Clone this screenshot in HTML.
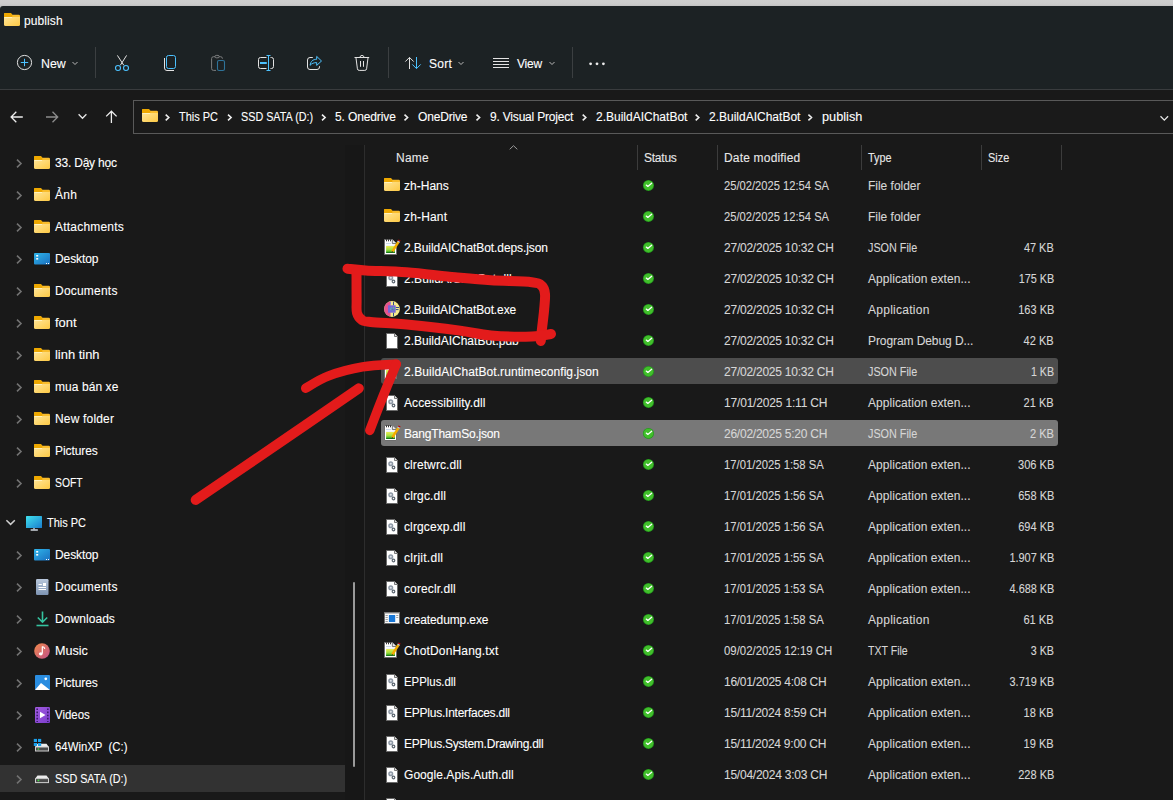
<!DOCTYPE html>
<html><head><meta charset="utf-8">
<style>
*{box-sizing:border-box}
html,body{margin:0;padding:0}
body{width:1173px;height:800px;overflow:hidden;position:relative;background:#191919;font-family:"Liberation Sans", sans-serif;font-size:12px;color:#fff}
.a{position:absolute}
.t{position:absolute;white-space:pre;-webkit-text-stroke:0.1px currentColor;line-height:14px;height:14px}
svg{position:absolute;overflow:visible}
</style></head><body>
<svg width="0" height="0" style="left:0;top:0"><defs>
<linearGradient id="fg" x1="0" y1="0" x2="1" y2="1"><stop offset="0" stop-color="#ffe597"/><stop offset="1" stop-color="#fdc944"/></linearGradient>
<linearGradient id="ng" x1="0" y1="0" x2="0" y2="1"><stop offset="0" stop-color="#dce8f0"/><stop offset="0.12" stop-color="#e6ea50"/><stop offset="0.55" stop-color="#a6e040"/><stop offset="1" stop-color="#2aa81e"/></linearGradient>
<linearGradient id="mon" x1="0" y1="0" x2="1" y2="1"><stop offset="0" stop-color="#40e2ee"/><stop offset="1" stop-color="#1a7ccc"/></linearGradient>
<linearGradient id="desk" x1="0" y1="0" x2="1" y2="1"><stop offset="0" stop-color="#2fb5ea"/><stop offset="1" stop-color="#1a6fc0"/></linearGradient>
<linearGradient id="doc" x1="0" y1="0" x2="0" y2="1"><stop offset="0" stop-color="#b9c8dc"/><stop offset="1" stop-color="#7d93b2"/></linearGradient>
<linearGradient id="mus" x1="0" y1="0" x2="1" y2="1"><stop offset="0" stop-color="#f08a4a"/><stop offset="1" stop-color="#c2508a"/></linearGradient>
<linearGradient id="vid" x1="0" y1="0" x2="1" y2="1"><stop offset="0" stop-color="#a35ce0"/><stop offset="1" stop-color="#7a3ccc"/></linearGradient>
</defs></svg>

<div class="a" style="left:0;top:0;width:1173px;height:12px;background:linear-gradient(#cecece 0,#cbcbcb 4px,#c2c2c2 6px)"></div>
<div class="a" style="left:0;top:6px;width:1173px;height:83px;background:#1c2224;border-top-left-radius:3px"></div>
<div class="a" style="left:0;top:89px;width:1173px;height:1px;background:#393c3e"></div>
<svg style="left:4px;top:13px" width="16" height="13" viewBox="0 0 16 13"><path d="M1.3 0 H6.8 L8.3 1.7 H14.7 Q16 1.7 16 3 V5 H0 V1.3 Q0 0 1.3 0Z" fill="#f9bd2c"/><path d="M1.3 0 H6.8 L8.3 1.7 V4.2 H0 V1.3 Q0 0 1.3 0Z" fill="#eea800"/><path d="M0 4 H16 V11.5 Q16 13 14.5 13 H1.5 Q0 13 0 11.5Z" fill="url(#fg)"/><path d="M0.5 4.5 H8" stroke="#fff2bd" stroke-width="1"/></svg>
<div class="t" style="left:24px;top:14px;color:#fff;letter-spacing:0.1px">publish</div>
<svg style="left:0;top:0" width="1173" height="140" viewBox="0 0 1173 140"><g fill="none" stroke-width="1">
<circle cx="24.5" cy="62.5" r="7.1" stroke="#e3e3e3"/>
<path d="M24.5 58.8 V66.2 M20.8 62.5 H28.2" stroke="#4cc2ff"/>
<path d="M72.5 62 L75 64.5 L77.5 62" stroke="#b8b8b8"/>
<path d="M117.4 55.4 L123.8 65.3 M126.6 55.4 L120.3 65.3" stroke="#e3e3e3"/>
<circle cx="118" cy="68" r="2.5" stroke="#4cc2ff" stroke-width="1.1"/>
<circle cx="126" cy="68" r="2.5" stroke="#4cc2ff" stroke-width="1.1"/>
<rect x="166.5" y="55.5" width="9" height="13" rx="2" stroke="#4cc2ff"/>
<path d="M164.5 58 V68 Q164.5 70.5 167 70.5 H174" stroke="#e3e3e3"/>
<path d="M215 56.7 H213.5 Q211.6 56.7 211.6 58.6 V68.5 Q211.6 70.4 213.5 70.4 H216 M219.2 56.7 H220.6 Q222.4 56.7 222.4 58.5 V58.8" stroke="#7c7e7f"/>
<rect x="215" y="55.4" width="4.2" height="2.4" rx="1.2" stroke="#7c7e7f"/>
<rect x="217.5" y="60.5" width="7" height="10" rx="1.6" stroke="#2f7399" stroke-width="1.1"/>
<path d="M266.5 57.5 H260.5 Q258.5 57.5 258.5 59.5 V66.5 Q258.5 68.5 260.5 68.5 H266.5 M270.5 57.5 H271.5 Q273.5 57.5 273.5 59.5 V66.5 Q273.5 68.5 271.5 68.5 H270.5" stroke="#e3e3e3"/>
<path d="M268.5 55.5 V70.5 M266.5 55.5 H270.5 M266.5 70.5 H270.5" stroke="#4cc2ff"/>
<path d="M260 63 H266.8" stroke="#4cc2ff" stroke-width="2"/>
<path d="M312.8 57.5 H310 Q307.5 57.5 307.5 60 V67 Q307.5 69.5 310 69.5 H317 Q319.5 69.5 319.5 67 V66.2" stroke="#e3e3e3"/>
<path d="M310.1 65.3 C310.5 61.3 313 59.3 316.7 59.3 V56.4 L321.5 61 L316.7 65.4 V62.6 C313.8 62.6 311.8 63.4 310.1 65.3 Z" stroke="#4cc2ff" stroke-linejoin="round"/>
<path d="M354.5 57.5 H369.2" stroke="#e3e3e3"/>
<path d="M359.9 57.3 Q360.2 55.4 362 55.4 Q363.8 55.4 364.1 57.3" stroke="#e3e3e3"/>
<path d="M356 58 L357.4 68.8 Q357.6 70.4 359.2 70.4 H364.8 Q366.4 70.4 366.6 68.8 L368 58" stroke="#e3e3e3"/>
<path d="M360.5 61 V66.8 M363.5 61 V66.8" stroke="#e3e3e3"/>
<path d="M409.5 69 V57.5 M405.3 61.6 L409.5 57.4 L413.7 61.6" stroke="#e3e3e3"/>
<path d="M416.5 57 V68.5 M412.3 64.4 L416.5 68.6 L420.7 64.4" stroke="#4cc2ff"/>
<path d="M458.5 62 L461 64.5 L463.5 62" stroke="#b8b8b8"/>
<path d="M493 58.5 H509 M493 61.5 H509 M493 64.5 H509 M493 67.5 H509" stroke="#e3e3e3"/>
<path d="M549.5 62 L552 64.5 L554.5 62" stroke="#b8b8b8"/>
</g>
<circle cx="590.6" cy="63.8" r="1.4" fill="#ececec"/><circle cx="597" cy="63.8" r="1.4" fill="#ececec"/><circle cx="603.4" cy="63.8" r="1.4" fill="#ececec"/>
<g fill="none" stroke-width="1.3">
<path d="M22.8 117 H11.2 M16.3 111.8 L11.1 117 L16.3 122.2" stroke="#ececec"/>
<path d="M46 117 H57.6 M52.5 111.8 L57.7 117 L52.5 122.2" stroke="#8c8c8c"/>
<path d="M78.6 114.3 L82.5 118.3 L86.4 114.3" stroke="#e6e6e6"/>
<path d="M111.4 123 V111.4 M106.2 116.4 L111.4 111.2 L116.6 116.4" stroke="#ececec"/>
</g></svg>
<div class="t" style="left:41px;top:57px;color:#fff;transform:scaleX(1.0333);transform-origin:0 0">New</div>
<div class="a" style="left:95px;top:47px;width:1px;height:31px;background:#3b3f41"></div>
<div class="a" style="left:388px;top:47px;width:1px;height:31px;background:#3b3f41"></div>
<div class="t" style="left:429px;top:57px;color:#fff;letter-spacing:0.3px">Sort</div>
<div class="t" style="left:517px;top:57px;color:#fff;letter-spacing:-0.2px">View</div>
<div class="a" style="left:572px;top:47px;width:1px;height:31px;background:#3b3f41"></div>
<div class="a" style="left:133px;top:100px;width:1100px;height:34px;border:1px solid #595959;background:#1a1a1a"></div>
<svg style="left:142px;top:109px" width="16" height="13" viewBox="0 0 16 13"><path d="M1.3 0 H6.8 L8.3 1.7 H14.7 Q16 1.7 16 3 V5 H0 V1.3 Q0 0 1.3 0Z" fill="#f9bd2c"/><path d="M1.3 0 H6.8 L8.3 1.7 V4.2 H0 V1.3 Q0 0 1.3 0Z" fill="#eea800"/><path d="M0 4 H16 V11.5 Q16 13 14.5 13 H1.5 Q0 13 0 11.5Z" fill="url(#fg)"/><path d="M0.5 4.5 H8" stroke="#fff2bd" stroke-width="1"/></svg>
<div class="t" style="left:179px;top:110px;color:#fff;transform:scaleX(0.9133);transform-origin:0 0">This PC</div>
<div class="t" style="left:241px;top:110px;color:#fff;transform:scaleX(0.8990);transform-origin:0 0">SSD SATA (D:)</div>
<div class="t" style="left:335px;top:110px;color:#fff;letter-spacing:-0.12px">5. Onedrive</div>
<div class="t" style="left:418px;top:110px;color:#fff;letter-spacing:-0.171px">OneDrive</div>
<div class="t" style="left:490px;top:110px;color:#fff;letter-spacing:-0.194px">9. Visual Project</div>
<div class="t" style="left:596px;top:110px;color:#fff">2.BuildAIChatBot</div>
<div class="t" style="left:709px;top:110px;color:#fff">2.BuildAIChatBot</div>
<div class="t" style="left:822px;top:110px;color:#fff;transform:scaleX(1.0604);transform-origin:0 0">publish</div>
<svg style="left:0;top:0" width="1173" height="140" viewBox="0 0 1173 140"><path d="M165.7 114.6 L168.8 117.5 L165.7 120.4 M228.0 114.6 L231.1 117.5 L228.0 120.4 M322.0 114.6 L325.1 117.5 L322.0 120.4 M404.5 114.6 L407.6 117.5 L404.5 120.4 M476.5 114.6 L479.6 117.5 L476.5 120.4 M582.7 114.6 L585.8 117.5 L582.7 120.4 M695.7 114.6 L698.8 117.5 L695.7 120.4 M808.4 114.6 L811.5 117.5 L808.4 120.4" stroke="#eeeeee" stroke-width="1.6" fill="none"/></svg>
<svg style="left:0;top:0" width="1173" height="140" viewBox="0 0 1173 140"><path d="M1160.5 116.3 L1164.3 120.1 L1168.1 116.3" stroke="#e6e6e6" stroke-width="1.3" fill="none"/></svg>
<div class="a" style="left:345px;top:145px;width:19px;height:655px;background:#171717"></div>
<div class="a" style="left:364px;top:145px;width:1px;height:655px;background:#2d2d2d"></div>
<svg style="left:0;top:155px" width="30" height="14" viewBox="0 155 30 14"><path d="M17 159.6 L21 163.5 L17 167.4" stroke="#727272" stroke-width="1.6" fill="none"/></svg>
<svg style="left:34px;top:156px" width="16" height="13" viewBox="0 0 16 13"><path d="M1.3 0 H6.8 L8.3 1.7 H14.7 Q16 1.7 16 3 V5 H0 V1.3 Q0 0 1.3 0Z" fill="#f9bd2c"/><path d="M1.3 0 H6.8 L8.3 1.7 V4.2 H0 V1.3 Q0 0 1.3 0Z" fill="#eea800"/><path d="M0 4 H16 V11.5 Q16 13 14.5 13 H1.5 Q0 13 0 11.5Z" fill="url(#fg)"/><path d="M0.5 4.5 H8" stroke="#fff2bd" stroke-width="1"/></svg>
<div class="t" style="left:55px;top:156px;color:#fff;letter-spacing:-0.21px">33. Dậy học</div>
<svg style="left:0;top:187px" width="30" height="14" viewBox="0 187 30 14"><path d="M17 191.6 L21 195.5 L17 199.4" stroke="#727272" stroke-width="1.6" fill="none"/></svg>
<svg style="left:34px;top:188px" width="16" height="13" viewBox="0 0 16 13"><path d="M1.3 0 H6.8 L8.3 1.7 H14.7 Q16 1.7 16 3 V5 H0 V1.3 Q0 0 1.3 0Z" fill="#f9bd2c"/><path d="M1.3 0 H6.8 L8.3 1.7 V4.2 H0 V1.3 Q0 0 1.3 0Z" fill="#eea800"/><path d="M0 4 H16 V11.5 Q16 13 14.5 13 H1.5 Q0 13 0 11.5Z" fill="url(#fg)"/><path d="M0.5 4.5 H8" stroke="#fff2bd" stroke-width="1"/></svg>
<div class="t" style="left:55px;top:188px;color:#fff;letter-spacing:0.3px">Ảnh</div>
<svg style="left:0;top:219px" width="30" height="14" viewBox="0 219 30 14"><path d="M17 223.6 L21 227.5 L17 231.4" stroke="#727272" stroke-width="1.6" fill="none"/></svg>
<svg style="left:34px;top:220px" width="16" height="13" viewBox="0 0 16 13"><path d="M1.3 0 H6.8 L8.3 1.7 H14.7 Q16 1.7 16 3 V5 H0 V1.3 Q0 0 1.3 0Z" fill="#f9bd2c"/><path d="M1.3 0 H6.8 L8.3 1.7 V4.2 H0 V1.3 Q0 0 1.3 0Z" fill="#eea800"/><path d="M0 4 H16 V11.5 Q16 13 14.5 13 H1.5 Q0 13 0 11.5Z" fill="url(#fg)"/><path d="M0.5 4.5 H8" stroke="#fff2bd" stroke-width="1"/></svg>
<div class="t" style="left:55px;top:220px;color:#fff;letter-spacing:0.21px">Attachments</div>
<svg style="left:0;top:251px" width="30" height="14" viewBox="0 251 30 14"><path d="M17 255.6 L21 259.5 L17 263.4" stroke="#727272" stroke-width="1.6" fill="none"/></svg>
<svg style="left:34px;top:253px" width="16" height="12" viewBox="0 0 16 12"><rect x="0" y="0" width="16" height="11.5" rx="1" fill="url(#desk)"/><rect x="2.2" y="2" width="2" height="1.6" fill="#fff"/><rect x="2.2" y="5" width="2" height="1.6" fill="#fff"/><rect x="12" y="10" width="1" height="1" fill="#fff"/><rect x="14" y="10" width="1" height="1" fill="#fff"/></svg>
<div class="t" style="left:55px;top:252px;color:#fff;letter-spacing:-0.1px">Desktop</div>
<svg style="left:0;top:283px" width="30" height="14" viewBox="0 283 30 14"><path d="M17 287.6 L21 291.5 L17 295.4" stroke="#727272" stroke-width="1.6" fill="none"/></svg>
<svg style="left:34px;top:284px" width="16" height="13" viewBox="0 0 16 13"><path d="M1.3 0 H6.8 L8.3 1.7 H14.7 Q16 1.7 16 3 V5 H0 V1.3 Q0 0 1.3 0Z" fill="#f9bd2c"/><path d="M1.3 0 H6.8 L8.3 1.7 V4.2 H0 V1.3 Q0 0 1.3 0Z" fill="#eea800"/><path d="M0 4 H16 V11.5 Q16 13 14.5 13 H1.5 Q0 13 0 11.5Z" fill="url(#fg)"/><path d="M0.5 4.5 H8" stroke="#fff2bd" stroke-width="1"/></svg>
<div class="t" style="left:55px;top:284px;color:#fff;letter-spacing:0.213px">Documents</div>
<svg style="left:0;top:315px" width="30" height="14" viewBox="0 315 30 14"><path d="M17 319.6 L21 323.5 L17 327.4" stroke="#727272" stroke-width="1.6" fill="none"/></svg>
<svg style="left:34px;top:316px" width="16" height="13" viewBox="0 0 16 13"><path d="M1.3 0 H6.8 L8.3 1.7 H14.7 Q16 1.7 16 3 V5 H0 V1.3 Q0 0 1.3 0Z" fill="#f9bd2c"/><path d="M1.3 0 H6.8 L8.3 1.7 V4.2 H0 V1.3 Q0 0 1.3 0Z" fill="#eea800"/><path d="M0 4 H16 V11.5 Q16 13 14.5 13 H1.5 Q0 13 0 11.5Z" fill="url(#fg)"/><path d="M0.5 4.5 H8" stroke="#fff2bd" stroke-width="1"/></svg>
<div class="t" style="left:55px;top:316px;color:#fff;transform:scaleX(1.0799);transform-origin:0 0">font</div>
<svg style="left:0;top:347px" width="30" height="14" viewBox="0 347 30 14"><path d="M17 351.6 L21 355.5 L17 359.4" stroke="#727272" stroke-width="1.6" fill="none"/></svg>
<svg style="left:34px;top:348px" width="16" height="13" viewBox="0 0 16 13"><path d="M1.3 0 H6.8 L8.3 1.7 H14.7 Q16 1.7 16 3 V5 H0 V1.3 Q0 0 1.3 0Z" fill="#f9bd2c"/><path d="M1.3 0 H6.8 L8.3 1.7 V4.2 H0 V1.3 Q0 0 1.3 0Z" fill="#eea800"/><path d="M0 4 H16 V11.5 Q16 13 14.5 13 H1.5 Q0 13 0 11.5Z" fill="url(#fg)"/><path d="M0.5 4.5 H8" stroke="#fff2bd" stroke-width="1"/></svg>
<div class="t" style="left:55px;top:348px;color:#fff;transform:scaleX(1.0773);transform-origin:0 0">linh tinh</div>
<svg style="left:0;top:379px" width="30" height="14" viewBox="0 379 30 14"><path d="M17 383.6 L21 387.5 L17 391.4" stroke="#727272" stroke-width="1.6" fill="none"/></svg>
<svg style="left:34px;top:380px" width="16" height="13" viewBox="0 0 16 13"><path d="M1.3 0 H6.8 L8.3 1.7 H14.7 Q16 1.7 16 3 V5 H0 V1.3 Q0 0 1.3 0Z" fill="#f9bd2c"/><path d="M1.3 0 H6.8 L8.3 1.7 V4.2 H0 V1.3 Q0 0 1.3 0Z" fill="#eea800"/><path d="M0 4 H16 V11.5 Q16 13 14.5 13 H1.5 Q0 13 0 11.5Z" fill="url(#fg)"/><path d="M0.5 4.5 H8" stroke="#fff2bd" stroke-width="1"/></svg>
<div class="t" style="left:55px;top:380px;color:#fff;letter-spacing:0.067px">mua bán xe</div>
<svg style="left:0;top:411px" width="30" height="14" viewBox="0 411 30 14"><path d="M17 415.6 L21 419.5 L17 423.4" stroke="#727272" stroke-width="1.6" fill="none"/></svg>
<svg style="left:34px;top:412px" width="16" height="13" viewBox="0 0 16 13"><path d="M1.3 0 H6.8 L8.3 1.7 H14.7 Q16 1.7 16 3 V5 H0 V1.3 Q0 0 1.3 0Z" fill="#f9bd2c"/><path d="M1.3 0 H6.8 L8.3 1.7 V4.2 H0 V1.3 Q0 0 1.3 0Z" fill="#eea800"/><path d="M0 4 H16 V11.5 Q16 13 14.5 13 H1.5 Q0 13 0 11.5Z" fill="url(#fg)"/><path d="M0.5 4.5 H8" stroke="#fff2bd" stroke-width="1"/></svg>
<div class="t" style="left:55px;top:412px;color:#fff;letter-spacing:0.178px">New folder</div>
<svg style="left:0;top:443px" width="30" height="14" viewBox="0 443 30 14"><path d="M17 447.6 L21 451.5 L17 455.4" stroke="#727272" stroke-width="1.6" fill="none"/></svg>
<svg style="left:34px;top:444px" width="16" height="13" viewBox="0 0 16 13"><path d="M1.3 0 H6.8 L8.3 1.7 H14.7 Q16 1.7 16 3 V5 H0 V1.3 Q0 0 1.3 0Z" fill="#f9bd2c"/><path d="M1.3 0 H6.8 L8.3 1.7 V4.2 H0 V1.3 Q0 0 1.3 0Z" fill="#eea800"/><path d="M0 4 H16 V11.5 Q16 13 14.5 13 H1.5 Q0 13 0 11.5Z" fill="url(#fg)"/><path d="M0.5 4.5 H8" stroke="#fff2bd" stroke-width="1"/></svg>
<div class="t" style="left:55px;top:444px;color:#fff;letter-spacing:-0.071px">Pictures</div>
<svg style="left:0;top:475px" width="30" height="14" viewBox="0 475 30 14"><path d="M17 479.6 L21 483.5 L17 487.4" stroke="#727272" stroke-width="1.6" fill="none"/></svg>
<svg style="left:34px;top:476px" width="16" height="13" viewBox="0 0 16 13"><path d="M1.3 0 H6.8 L8.3 1.7 H14.7 Q16 1.7 16 3 V5 H0 V1.3 Q0 0 1.3 0Z" fill="#f9bd2c"/><path d="M1.3 0 H6.8 L8.3 1.7 V4.2 H0 V1.3 Q0 0 1.3 0Z" fill="#eea800"/><path d="M0 4 H16 V11.5 Q16 13 14.5 13 H1.5 Q0 13 0 11.5Z" fill="url(#fg)"/><path d="M0.5 4.5 H8" stroke="#fff2bd" stroke-width="1"/></svg>
<div class="t" style="left:55px;top:476px;color:#fff;transform:scaleX(0.8625);transform-origin:0 0">SOFT</div>
<svg style="left:0;top:500px" width="30" height="40" viewBox="0 500 30 40"><path d="M6.4 520.2 L10.6 524.4 L14.8 520.2" stroke="#cfcfcf" stroke-width="1.5" fill="none"/></svg>
<svg style="left:26px;top:516px" width="16" height="15" viewBox="0 0 16 15"><rect x="0" y="0" width="16" height="12" rx="0.6" fill="url(#mon)"/><rect x="7.2" y="12" width="1.6" height="1.5" fill="#b8c0c8"/><rect x="4.5" y="13.3" width="7.5" height="1.4" rx="0.6" fill="#d0d6de"/></svg>
<div class="t" style="left:47px;top:516px;color:#fff;transform:scaleX(0.9133);transform-origin:0 0">This PC</div>
<div class="a" style="left:0;top:765px;width:345px;height:27px;background:#323232"></div>
<svg style="left:0;top:547px" width="30" height="14" viewBox="0 547 30 14"><path d="M17 551.6 L21 555.5 L17 559.4" stroke="#727272" stroke-width="1.6" fill="none"/></svg>
<svg style="left:34px;top:549px" width="16" height="12" viewBox="0 0 16 12"><rect x="0" y="0" width="16" height="11.5" rx="1" fill="url(#desk)"/><rect x="2.2" y="2" width="2" height="1.6" fill="#fff"/><rect x="2.2" y="5" width="2" height="1.6" fill="#fff"/><rect x="12" y="10" width="1" height="1" fill="#fff"/><rect x="14" y="10" width="1" height="1" fill="#fff"/></svg>
<div class="t" style="left:55px;top:548px;color:#fff;letter-spacing:-0.1px">Desktop</div>
<svg style="left:0;top:579px" width="30" height="14" viewBox="0 579 30 14"><path d="M17 583.6 L21 587.5 L17 591.4" stroke="#727272" stroke-width="1.6" fill="none"/></svg>
<svg style="left:36px;top:579px" width="13" height="16" viewBox="0 0 13 16"><rect x="0" y="0" width="12.5" height="16" rx="1.2" fill="url(#doc)"/><rect x="7" y="4" width="3" height="3" fill="#fff"/><path d="M2.5 5.5 H5.8 M2.5 8.5 H10 M2.5 10.5 H10" stroke="#fff" stroke-width="1"/></svg>
<div class="t" style="left:55px;top:580px;color:#fff;letter-spacing:0.213px">Documents</div>
<svg style="left:0;top:611px" width="30" height="14" viewBox="0 611 30 14"><path d="M17 615.6 L21 619.5 L17 623.4" stroke="#727272" stroke-width="1.6" fill="none"/></svg>
<svg style="left:36px;top:611px" width="13" height="16" viewBox="0 0 13 16"><path d="M6.5 0.5 V11 M1.8 6.5 L6.5 11.2 L11.2 6.5" stroke="#35c4a0" stroke-width="1.6" fill="none"/><path d="M0.5 14.5 H12.5" stroke="#35c4a0" stroke-width="1.6"/></svg>
<div class="t" style="left:55px;top:612px;color:#fff;letter-spacing:0.062px">Downloads</div>
<svg style="left:0;top:643px" width="30" height="14" viewBox="0 643 30 14"><path d="M17 647.6 L21 651.5 L17 655.4" stroke="#727272" stroke-width="1.6" fill="none"/></svg>
<svg style="left:34px;top:643px" width="16" height="16" viewBox="0 0 16 16"><circle cx="8" cy="8" r="7.8" fill="url(#mus)"/><path d="M8.3 3.5 V10.5 M8.3 3.5 Q10.5 4 10.8 5.8" stroke="#fff" stroke-width="1.2" fill="none"/><ellipse cx="6.8" cy="10.8" rx="1.9" ry="1.6" fill="#fff"/></svg>
<div class="t" style="left:55px;top:644px;color:#fff;transform:scaleX(1.0479);transform-origin:0 0">Music</div>
<svg style="left:0;top:675px" width="30" height="14" viewBox="0 675 30 14"><path d="M17 679.6 L21 683.5 L17 687.4" stroke="#727272" stroke-width="1.6" fill="none"/></svg>
<svg style="left:35px;top:675px" width="15" height="15" viewBox="0 0 15 15"><rect x="0" y="0" width="15" height="15" rx="1" fill="#2a8de0"/><path d="M0 15 L6 8 L15 15Z" fill="#fff"/><circle cx="10.8" cy="3.8" r="1.4" fill="#fff"/></svg>
<div class="t" style="left:55px;top:676px;color:#fff;letter-spacing:-0.071px">Pictures</div>
<svg style="left:0;top:707px" width="30" height="14" viewBox="0 707 30 14"><path d="M17 711.6 L21 715.5 L17 719.4" stroke="#727272" stroke-width="1.6" fill="none"/></svg>
<svg style="left:35px;top:707px" width="15" height="16" viewBox="0 0 15 16"><rect x="0" y="0" width="15" height="16" rx="1.2" fill="url(#vid)"/><path d="M2.2 1.5 V15 M12.8 1.5 V15" stroke="#3a1a6a" stroke-width="1.6" stroke-dasharray="1.6 1.5"/><path d="M5 4.8 L10.5 8 L5 11.2Z" fill="#fff"/></svg>
<div class="t" style="left:55px;top:708px;color:#fff;transform:scaleX(0.9534);transform-origin:0 0">Videos</div>
<svg style="left:0;top:739px" width="30" height="14" viewBox="0 739 30 14"><path d="M17 743.6 L21 747.5 L17 751.4" stroke="#727272" stroke-width="1.6" fill="none"/></svg>
<svg style="left:33px;top:738px" width="17" height="14" viewBox="0 0 17 14"><path d="M4.5 5.8 H13.5 L15.8 9 H2.2 Z" fill="#ececec"/><rect x="2.5" y="9" width="13" height="4" fill="#4a4a4a" stroke="#cfcfcf" stroke-width="1"/><circle cx="5.4" cy="11" r="0.85" fill="#3ce040"/><rect x="0.8" y="0.9" width="3.2" height="3.1" fill="#1aa0ec"/><rect x="5" y="0.9" width="3.2" height="3.1" fill="#1aa0ec"/><rect x="0.8" y="5" width="3.2" height="3" fill="#1aa0ec"/><rect x="5" y="5" width="3.2" height="3" fill="#1aa0ec"/></svg>
<div class="t" style="left:55px;top:740px;color:#fff;transform:scaleX(0.9477);transform-origin:0 0">64WinXP  (C:)</div>
<svg style="left:0;top:771px" width="30" height="14" viewBox="0 771 30 14"><path d="M17 775.6 L21 779.5 L17 783.4" stroke="#727272" stroke-width="1.6" fill="none"/></svg>
<svg style="left:33px;top:774px" width="17" height="10" viewBox="0 0 17 10"><path d="M4.5 1.6 H13.5 L15.8 4.6 H2.2 Z" fill="#ececec"/><rect x="2.5" y="4.6" width="13" height="4" fill="#4a4a4a" stroke="#cfcfcf" stroke-width="1"/><circle cx="5.4" cy="6.4" r="0.85" fill="#3ce040"/></svg>
<div class="t" style="left:55px;top:772px;color:#fff;transform:scaleX(0.8990);transform-origin:0 0">SSD SATA (D:)</div>
<div class="a" style="left:353px;top:582px;width:2px;height:185px;border-radius:1px;background:#9a9a9a"></div>
<div class="t" style="left:396px;top:151px;color:#e8e8e8;letter-spacing:0.233px">Name</div>
<svg style="left:509px;top:145px" width="9" height="5" viewBox="0 0 9 5"><path d="M0.7 4.3 L4.5 0.7 L8.3 4.3" stroke="#9a9a9a" stroke-width="1" fill="none"/></svg>
<div class="a" style="left:637px;top:145px;width:1px;height:25px;background:#3c3c3c"></div>
<div class="a" style="left:717px;top:145px;width:1px;height:25px;background:#3c3c3c"></div>
<div class="a" style="left:861px;top:145px;width:1px;height:25px;background:#3c3c3c"></div>
<div class="a" style="left:981px;top:145px;width:1px;height:25px;background:#3c3c3c"></div>
<div class="a" style="left:1061px;top:145px;width:1px;height:25px;background:#3c3c3c"></div>
<div class="t" style="left:644px;top:151px;color:#e8e8e8;letter-spacing:-0.24px">Status</div>
<div class="t" style="left:724px;top:151px;color:#e8e8e8;letter-spacing:0.183px">Date modified</div>
<div class="t" style="left:868px;top:151px;color:#e8e8e8;transform:scaleX(0.9039);transform-origin:0 0">Type</div>
<div class="t" style="left:988px;top:151px;color:#e8e8e8;transform:scaleX(0.9100);transform-origin:0 0">Size</div>
<svg style="left:384px;top:178px" width="16" height="13" viewBox="0 0 16 13"><path d="M1.3 0 H6.8 L8.3 1.7 H14.7 Q16 1.7 16 3 V5 H0 V1.3 Q0 0 1.3 0Z" fill="#f9bd2c"/><path d="M1.3 0 H6.8 L8.3 1.7 V4.2 H0 V1.3 Q0 0 1.3 0Z" fill="#eea800"/><path d="M0 4 H16 V11.5 Q16 13 14.5 13 H1.5 Q0 13 0 11.5Z" fill="url(#fg)"/><path d="M0.5 4.5 H8" stroke="#fff2bd" stroke-width="1"/></svg>
<div class="t" style="left:404px;top:179px;color:#fff;letter-spacing:0.017px">zh-Hans</div>
<svg style="left:642px;top:179px" width="12" height="12" viewBox="0 0 12 12"><g transform="translate(0.45 0.45)"><circle cx="6" cy="6" r="5.5" fill="#259a1e"/><circle cx="6" cy="6" r="4.8" fill="#41bf2b"/><path d="M3.8 5.6 L5.4 7 L9.2 3.8" stroke="#fff" stroke-width="1.25" fill="none" stroke-linecap="round" stroke-linejoin="round"/></g></svg>
<div class="t" style="left:724px;top:179px;color:#d6d6d6;transform:scaleX(0.9317);transform-origin:0 0">25/02/2025 12:54 SA</div>
<div class="t" style="left:868px;top:179px;color:#d6d6d6;letter-spacing:-0.02px">File folder</div>
<svg style="left:384px;top:209px" width="16" height="13" viewBox="0 0 16 13"><path d="M1.3 0 H6.8 L8.3 1.7 H14.7 Q16 1.7 16 3 V5 H0 V1.3 Q0 0 1.3 0Z" fill="#f9bd2c"/><path d="M1.3 0 H6.8 L8.3 1.7 V4.2 H0 V1.3 Q0 0 1.3 0Z" fill="#eea800"/><path d="M0 4 H16 V11.5 Q16 13 14.5 13 H1.5 Q0 13 0 11.5Z" fill="url(#fg)"/><path d="M0.5 4.5 H8" stroke="#fff2bd" stroke-width="1"/></svg>
<div class="t" style="left:404px;top:210px;color:#fff;letter-spacing:0.167px">zh-Hant</div>
<svg style="left:642px;top:210px" width="12" height="12" viewBox="0 0 12 12"><g transform="translate(0.45 0.45)"><circle cx="6" cy="6" r="5.5" fill="#259a1e"/><circle cx="6" cy="6" r="4.8" fill="#41bf2b"/><path d="M3.8 5.6 L5.4 7 L9.2 3.8" stroke="#fff" stroke-width="1.25" fill="none" stroke-linecap="round" stroke-linejoin="round"/></g></svg>
<div class="t" style="left:724px;top:210px;color:#d6d6d6;transform:scaleX(0.9317);transform-origin:0 0">25/02/2025 12:54 SA</div>
<div class="t" style="left:868px;top:210px;color:#d6d6d6;letter-spacing:-0.02px">File folder</div>
<svg style="left:384px;top:239px" width="17" height="16" viewBox="0 0 17 16"><path d="M0.5 0.5 H8.3 L12.5 4.6 V15.5 H0.5Z" fill="#fff" stroke="#6e6e6e" stroke-width="1"/><path d="M8.3 0.5 V4.6 H12.5" fill="#e6e6e6" stroke="#6e6e6e" stroke-width="1"/><rect x="2" y="0.3" width="1" height="2" fill="#333"/><rect x="4" y="0.3" width="1" height="2" fill="#333"/><rect x="6" y="0.3" width="1" height="2" fill="#333"/><path d="M2 4.6 H7" stroke="#b8cce0" stroke-width="0.8"/><rect x="2.1" y="6.5" width="8.8" height="7.3" fill="url(#ng)"/><path d="M2.1 13.4 H10.9" stroke="#0b6b0b" stroke-width="0.9"/><path d="M8.3 12.6 L14.6 2.6" stroke="#f3ad00" stroke-width="2.6"/><path d="M14.3 3.1 L15 2" stroke="#a8c0e0" stroke-width="2.4"/><path d="M15 2 L15.6 1" stroke="#c00000" stroke-width="2.4"/><path d="M7.7 13.6 L8.6 12.3" stroke="#333" stroke-width="1"/></svg>
<div class="t" style="left:404px;top:241px;color:#fff;letter-spacing:-0.084px">2.BuildAIChatBot.deps.json</div>
<svg style="left:642px;top:241px" width="12" height="12" viewBox="0 0 12 12"><g transform="translate(0.45 0.45)"><circle cx="6" cy="6" r="5.5" fill="#259a1e"/><circle cx="6" cy="6" r="4.8" fill="#41bf2b"/><path d="M3.8 5.6 L5.4 7 L9.2 3.8" stroke="#fff" stroke-width="1.25" fill="none" stroke-linecap="round" stroke-linejoin="round"/></g></svg>
<div class="t" style="left:724px;top:241px;color:#d6d6d6;letter-spacing:-0.233px">27/02/2025 10:32 CH</div>
<div class="t" style="left:868px;top:241px;color:#d6d6d6;transform:scaleX(0.9013);transform-origin:0 0">JSON File</div>
<div class="t" style="right:119px;top:241px;color:#d6d6d6;transform:scaleX(0.9113);transform-origin:100% 0">47 KB</div>
<svg style="left:386px;top:271px" width="12" height="16" viewBox="0 0 12 16"><path d="M0.5 0.5 H8.5 L11.5 3.5 V15.5 H0.5Z" fill="#fff" stroke="#6a6a6a" stroke-width="1"/><path d="M8.5 0.5 V3.5 H11.5" fill="#e2e2e2" stroke="#6a6a6a" stroke-width="0.9"/><circle cx="4.75" cy="6.75" r="1.8" fill="#dfe3e8" stroke="#8e99a6" stroke-width="1.5"/><circle cx="7.5" cy="10.5" r="1.3" fill="#fff" stroke="#5c6670" stroke-width="1.2"/></svg>
<div class="t" style="left:404px;top:272px;color:#fff;letter-spacing:0.053px">2.BuildAIChatBot.dll</div>
<svg style="left:642px;top:272px" width="12" height="12" viewBox="0 0 12 12"><g transform="translate(0.45 0.45)"><circle cx="6" cy="6" r="5.5" fill="#259a1e"/><circle cx="6" cy="6" r="4.8" fill="#41bf2b"/><path d="M3.8 5.6 L5.4 7 L9.2 3.8" stroke="#fff" stroke-width="1.25" fill="none" stroke-linecap="round" stroke-linejoin="round"/></g></svg>
<div class="t" style="left:724px;top:272px;color:#d6d6d6;letter-spacing:-0.233px">27/02/2025 10:32 CH</div>
<div class="t" style="left:868px;top:272px;color:#d6d6d6;letter-spacing:0.063px">Application exten...</div>
<div class="t" style="right:119px;top:272px;color:#d6d6d6;transform:scaleX(0.9060);transform-origin:100% 0">175 KB</div>
<svg style="left:384px;top:301px" width="16" height="16" viewBox="0 0 16 16"><circle cx="8" cy="8" r="7.9" fill="#f6ea8c"/><path d="M6.5 0.5 A7.6 7.6 0 0 0 6.5 15.5 Z" fill="#e6528e"/><path d="M9.5 0.8 V4.3 M9.5 11.7 V15.2 M11.7 6.5 H15 M11.7 8.6 H14.5" stroke="#1e3c8c" stroke-width="0.9"/><path d="M6.5 1 V3.5" stroke="#8a86e6" stroke-width="0.9"/><rect x="4" y="4.3" width="7.7" height="7.4" fill="#7568d8"/><path d="M6.2 9 L7.6 6.4 M8.6 9.5 L9.6 8.5 V6" stroke="#52d090" stroke-width="1"/></svg>
<div class="t" style="left:404px;top:303px;color:#fff;letter-spacing:-0.095px">2.BuildAIChatBot.exe</div>
<svg style="left:642px;top:303px" width="12" height="12" viewBox="0 0 12 12"><g transform="translate(0.45 0.45)"><circle cx="6" cy="6" r="5.5" fill="#259a1e"/><circle cx="6" cy="6" r="4.8" fill="#41bf2b"/><path d="M3.8 5.6 L5.4 7 L9.2 3.8" stroke="#fff" stroke-width="1.25" fill="none" stroke-linecap="round" stroke-linejoin="round"/></g></svg>
<div class="t" style="left:724px;top:303px;color:#d6d6d6;letter-spacing:-0.233px">27/02/2025 10:32 CH</div>
<div class="t" style="left:868px;top:303px;color:#d6d6d6;letter-spacing:0.26px">Application</div>
<div class="t" style="right:119px;top:303px;color:#d6d6d6;transform:scaleX(0.9175);transform-origin:100% 0">163 KB</div>
<svg style="left:386px;top:333px" width="12" height="16" viewBox="0 0 12 16"><path d="M0.5 0.5 H8.5 L11.5 3.5 V15.5 H0.5Z" fill="#fff" stroke="#6a6a6a" stroke-width="1"/><path d="M8.5 0.5 V3.5 H11.5" fill="#e2e2e2" stroke="#6a6a6a" stroke-width="0.9"/></svg>
<div class="t" style="left:404px;top:334px;color:#fff">2.BuildAIChatBot.pdb</div>
<svg style="left:642px;top:334px" width="12" height="12" viewBox="0 0 12 12"><g transform="translate(0.45 0.45)"><circle cx="6" cy="6" r="5.5" fill="#259a1e"/><circle cx="6" cy="6" r="4.8" fill="#41bf2b"/><path d="M3.8 5.6 L5.4 7 L9.2 3.8" stroke="#fff" stroke-width="1.25" fill="none" stroke-linecap="round" stroke-linejoin="round"/></g></svg>
<div class="t" style="left:724px;top:334px;color:#d6d6d6;letter-spacing:-0.233px">27/02/2025 10:32 CH</div>
<div class="t" style="left:868px;top:334px;color:#d6d6d6;letter-spacing:-0.082px">Program Debug D...</div>
<div class="t" style="right:119px;top:334px;color:#d6d6d6;transform:scaleX(0.9205);transform-origin:100% 0">42 KB</div>
<div class="a" style="left:381px;top:358px;width:677px;height:26px;border-radius:3px;background:#4d4d4d"></div>
<svg style="left:384px;top:363px" width="17" height="16" viewBox="0 0 17 16"><path d="M0.5 0.5 H8.3 L12.5 4.6 V15.5 H0.5Z" fill="#fff" stroke="#6e6e6e" stroke-width="1"/><path d="M8.3 0.5 V4.6 H12.5" fill="#e6e6e6" stroke="#6e6e6e" stroke-width="1"/><rect x="2" y="0.3" width="1" height="2" fill="#333"/><rect x="4" y="0.3" width="1" height="2" fill="#333"/><rect x="6" y="0.3" width="1" height="2" fill="#333"/><path d="M2 4.6 H7" stroke="#b8cce0" stroke-width="0.8"/><rect x="2.1" y="6.5" width="8.8" height="7.3" fill="url(#ng)"/><path d="M2.1 13.4 H10.9" stroke="#0b6b0b" stroke-width="0.9"/><path d="M8.3 12.6 L14.6 2.6" stroke="#f3ad00" stroke-width="2.6"/><path d="M14.3 3.1 L15 2" stroke="#a8c0e0" stroke-width="2.4"/><path d="M15 2 L15.6 1" stroke="#c00000" stroke-width="2.4"/><path d="M7.7 13.6 L8.6 12.3" stroke="#333" stroke-width="1"/></svg>
<div class="t" style="left:404px;top:365px;color:#fff;letter-spacing:0.079px">2.BuildAIChatBot.runtimeconfig.json</div>
<svg style="left:642px;top:365px" width="12" height="12" viewBox="0 0 12 12"><g transform="translate(0.45 0.45)"><circle cx="6" cy="6" r="5.5" fill="#259a1e"/><circle cx="6" cy="6" r="4.8" fill="#41bf2b"/><path d="M3.8 5.6 L5.4 7 L9.2 3.8" stroke="#fff" stroke-width="1.25" fill="none" stroke-linecap="round" stroke-linejoin="round"/></g></svg>
<div class="t" style="left:724px;top:365px;color:#d6d6d6;letter-spacing:-0.233px">27/02/2025 10:32 CH</div>
<div class="t" style="left:868px;top:365px;color:#d6d6d6;transform:scaleX(0.9013);transform-origin:0 0">JSON File</div>
<div class="t" style="right:119px;top:365px;color:#d6d6d6;transform:scaleX(0.8885);transform-origin:100% 0">1 KB</div>
<svg style="left:386px;top:395px" width="12" height="16" viewBox="0 0 12 16"><path d="M0.5 0.5 H8.5 L11.5 3.5 V15.5 H0.5Z" fill="#fff" stroke="#6a6a6a" stroke-width="1"/><path d="M8.5 0.5 V3.5 H11.5" fill="#e2e2e2" stroke="#6a6a6a" stroke-width="0.9"/><circle cx="4.75" cy="6.75" r="1.8" fill="#dfe3e8" stroke="#8e99a6" stroke-width="1.5"/><circle cx="7.5" cy="10.5" r="1.3" fill="#fff" stroke="#5c6670" stroke-width="1.2"/></svg>
<div class="t" style="left:404px;top:396px;color:#fff;letter-spacing:0.106px">Accessibility.dll</div>
<svg style="left:642px;top:396px" width="12" height="12" viewBox="0 0 12 12"><g transform="translate(0.45 0.45)"><circle cx="6" cy="6" r="5.5" fill="#259a1e"/><circle cx="6" cy="6" r="4.8" fill="#41bf2b"/><path d="M3.8 5.6 L5.4 7 L9.2 3.8" stroke="#fff" stroke-width="1.25" fill="none" stroke-linecap="round" stroke-linejoin="round"/></g></svg>
<div class="t" style="left:724px;top:396px;color:#d6d6d6;letter-spacing:-0.182px">17/01/2025 1:11 CH</div>
<div class="t" style="left:868px;top:396px;color:#d6d6d6;letter-spacing:0.063px">Application exten...</div>
<div class="t" style="right:119px;top:396px;color:#d6d6d6;transform:scaleX(0.9205);transform-origin:100% 0">21 KB</div>
<div class="a" style="left:381px;top:420px;width:677px;height:26px;border-radius:3px;background:#787878"></div>
<svg style="left:384px;top:425px" width="17" height="16" viewBox="0 0 17 16"><path d="M0.5 0.5 H8.3 L12.5 4.6 V15.5 H0.5Z" fill="#fff" stroke="#6e6e6e" stroke-width="1"/><path d="M8.3 0.5 V4.6 H12.5" fill="#e6e6e6" stroke="#6e6e6e" stroke-width="1"/><rect x="2" y="0.3" width="1" height="2" fill="#333"/><rect x="4" y="0.3" width="1" height="2" fill="#333"/><rect x="6" y="0.3" width="1" height="2" fill="#333"/><path d="M2 4.6 H7" stroke="#b8cce0" stroke-width="0.8"/><rect x="2.1" y="6.5" width="8.8" height="7.3" fill="url(#ng)"/><path d="M2.1 13.4 H10.9" stroke="#0b6b0b" stroke-width="0.9"/><path d="M8.3 12.6 L14.6 2.6" stroke="#f3ad00" stroke-width="2.6"/><path d="M14.3 3.1 L15 2" stroke="#a8c0e0" stroke-width="2.4"/><path d="M15 2 L15.6 1" stroke="#c00000" stroke-width="2.4"/><path d="M7.7 13.6 L8.6 12.3" stroke="#333" stroke-width="1"/></svg>
<div class="t" style="left:404px;top:427px;color:#fff;letter-spacing:-0.193px">BangThamSo.json</div>
<svg style="left:642px;top:427px" width="12" height="12" viewBox="0 0 12 12"><g transform="translate(0.45 0.45)"><circle cx="6" cy="6" r="5.5" fill="#259a1e"/><circle cx="6" cy="6" r="4.8" fill="#41bf2b"/><path d="M3.8 5.6 L5.4 7 L9.2 3.8" stroke="#fff" stroke-width="1.25" fill="none" stroke-linecap="round" stroke-linejoin="round"/></g></svg>
<div class="t" style="left:724px;top:427px;color:#d6d6d6;letter-spacing:-0.241px">26/02/2025 5:20 CH</div>
<div class="t" style="left:868px;top:427px;color:#d6d6d6;transform:scaleX(0.9013);transform-origin:0 0">JSON File</div>
<div class="t" style="right:119px;top:427px;color:#d6d6d6;transform:scaleX(0.9250);transform-origin:100% 0">2 KB</div>
<svg style="left:386px;top:457px" width="12" height="16" viewBox="0 0 12 16"><path d="M0.5 0.5 H8.5 L11.5 3.5 V15.5 H0.5Z" fill="#fff" stroke="#6a6a6a" stroke-width="1"/><path d="M8.5 0.5 V3.5 H11.5" fill="#e2e2e2" stroke="#6a6a6a" stroke-width="0.9"/><circle cx="4.75" cy="6.75" r="1.8" fill="#dfe3e8" stroke="#8e99a6" stroke-width="1.5"/><circle cx="7.5" cy="10.5" r="1.3" fill="#fff" stroke="#5c6670" stroke-width="1.2"/></svg>
<div class="t" style="left:404px;top:458px;color:#fff;letter-spacing:0.091px">clretwrc.dll</div>
<svg style="left:642px;top:458px" width="12" height="12" viewBox="0 0 12 12"><g transform="translate(0.45 0.45)"><circle cx="6" cy="6" r="5.5" fill="#259a1e"/><circle cx="6" cy="6" r="4.8" fill="#41bf2b"/><path d="M3.8 5.6 L5.4 7 L9.2 3.8" stroke="#fff" stroke-width="1.25" fill="none" stroke-linecap="round" stroke-linejoin="round"/></g></svg>
<div class="t" style="left:724px;top:458px;color:#d6d6d6;transform:scaleX(0.9406);transform-origin:0 0">17/01/2025 1:58 SA</div>
<div class="t" style="left:868px;top:458px;color:#d6d6d6;letter-spacing:0.063px">Application exten...</div>
<div class="t" style="right:119px;top:458px;color:#d6d6d6;transform:scaleX(0.9238);transform-origin:100% 0">306 KB</div>
<svg style="left:386px;top:488px" width="12" height="16" viewBox="0 0 12 16"><path d="M0.5 0.5 H8.5 L11.5 3.5 V15.5 H0.5Z" fill="#fff" stroke="#6a6a6a" stroke-width="1"/><path d="M8.5 0.5 V3.5 H11.5" fill="#e2e2e2" stroke="#6a6a6a" stroke-width="0.9"/><circle cx="4.75" cy="6.75" r="1.8" fill="#dfe3e8" stroke="#8e99a6" stroke-width="1.5"/><circle cx="7.5" cy="10.5" r="1.3" fill="#fff" stroke="#5c6670" stroke-width="1.2"/></svg>
<div class="t" style="left:404px;top:489px;color:#fff;letter-spacing:0.15px">clrgc.dll</div>
<svg style="left:642px;top:489px" width="12" height="12" viewBox="0 0 12 12"><g transform="translate(0.45 0.45)"><circle cx="6" cy="6" r="5.5" fill="#259a1e"/><circle cx="6" cy="6" r="4.8" fill="#41bf2b"/><path d="M3.8 5.6 L5.4 7 L9.2 3.8" stroke="#fff" stroke-width="1.25" fill="none" stroke-linecap="round" stroke-linejoin="round"/></g></svg>
<div class="t" style="left:724px;top:489px;color:#d6d6d6;transform:scaleX(0.9407);transform-origin:0 0">17/01/2025 1:56 SA</div>
<div class="t" style="left:868px;top:489px;color:#d6d6d6;letter-spacing:0.063px">Application exten...</div>
<div class="t" style="right:119px;top:489px;color:#d6d6d6;transform:scaleX(0.9175);transform-origin:100% 0">658 KB</div>
<svg style="left:386px;top:519px" width="12" height="16" viewBox="0 0 12 16"><path d="M0.5 0.5 H8.5 L11.5 3.5 V15.5 H0.5Z" fill="#fff" stroke="#6a6a6a" stroke-width="1"/><path d="M8.5 0.5 V3.5 H11.5" fill="#e2e2e2" stroke="#6a6a6a" stroke-width="0.9"/><circle cx="4.75" cy="6.75" r="1.8" fill="#dfe3e8" stroke="#8e99a6" stroke-width="1.5"/><circle cx="7.5" cy="10.5" r="1.3" fill="#fff" stroke="#5c6670" stroke-width="1.2"/></svg>
<div class="t" style="left:404px;top:520px;color:#fff;letter-spacing:0.118px">clrgcexp.dll</div>
<svg style="left:642px;top:520px" width="12" height="12" viewBox="0 0 12 12"><g transform="translate(0.45 0.45)"><circle cx="6" cy="6" r="5.5" fill="#259a1e"/><circle cx="6" cy="6" r="4.8" fill="#41bf2b"/><path d="M3.8 5.6 L5.4 7 L9.2 3.8" stroke="#fff" stroke-width="1.25" fill="none" stroke-linecap="round" stroke-linejoin="round"/></g></svg>
<div class="t" style="left:724px;top:520px;color:#d6d6d6;transform:scaleX(0.9407);transform-origin:0 0">17/01/2025 1:56 SA</div>
<div class="t" style="left:868px;top:520px;color:#d6d6d6;letter-spacing:0.063px">Application exten...</div>
<div class="t" style="right:119px;top:520px;color:#d6d6d6;transform:scaleX(0.9175);transform-origin:100% 0">694 KB</div>
<svg style="left:386px;top:550px" width="12" height="16" viewBox="0 0 12 16"><path d="M0.5 0.5 H8.5 L11.5 3.5 V15.5 H0.5Z" fill="#fff" stroke="#6a6a6a" stroke-width="1"/><path d="M8.5 0.5 V3.5 H11.5" fill="#e2e2e2" stroke="#6a6a6a" stroke-width="0.9"/><circle cx="4.75" cy="6.75" r="1.8" fill="#dfe3e8" stroke="#8e99a6" stroke-width="1.5"/><circle cx="7.5" cy="10.5" r="1.3" fill="#fff" stroke="#5c6670" stroke-width="1.2"/></svg>
<div class="t" style="left:404px;top:551px;color:#fff;letter-spacing:0.256px">clrjit.dll</div>
<svg style="left:642px;top:551px" width="12" height="12" viewBox="0 0 12 12"><g transform="translate(0.45 0.45)"><circle cx="6" cy="6" r="5.5" fill="#259a1e"/><circle cx="6" cy="6" r="4.8" fill="#41bf2b"/><path d="M3.8 5.6 L5.4 7 L9.2 3.8" stroke="#fff" stroke-width="1.25" fill="none" stroke-linecap="round" stroke-linejoin="round"/></g></svg>
<div class="t" style="left:724px;top:551px;color:#d6d6d6;transform:scaleX(0.9407);transform-origin:0 0">17/01/2025 1:55 SA</div>
<div class="t" style="left:868px;top:551px;color:#d6d6d6;letter-spacing:0.063px">Application exten...</div>
<div class="t" style="right:119px;top:551px;color:#d6d6d6;transform:scaleX(0.9108);transform-origin:100% 0">1.907 KB</div>
<svg style="left:386px;top:581px" width="12" height="16" viewBox="0 0 12 16"><path d="M0.5 0.5 H8.5 L11.5 3.5 V15.5 H0.5Z" fill="#fff" stroke="#6a6a6a" stroke-width="1"/><path d="M8.5 0.5 V3.5 H11.5" fill="#e2e2e2" stroke="#6a6a6a" stroke-width="0.9"/><circle cx="4.75" cy="6.75" r="1.8" fill="#dfe3e8" stroke="#8e99a6" stroke-width="1.5"/><circle cx="7.5" cy="10.5" r="1.3" fill="#fff" stroke="#5c6670" stroke-width="1.2"/></svg>
<div class="t" style="left:404px;top:582px;color:#fff;letter-spacing:0.11px">coreclr.dll</div>
<svg style="left:642px;top:582px" width="12" height="12" viewBox="0 0 12 12"><g transform="translate(0.45 0.45)"><circle cx="6" cy="6" r="5.5" fill="#259a1e"/><circle cx="6" cy="6" r="4.8" fill="#41bf2b"/><path d="M3.8 5.6 L5.4 7 L9.2 3.8" stroke="#fff" stroke-width="1.25" fill="none" stroke-linecap="round" stroke-linejoin="round"/></g></svg>
<div class="t" style="left:724px;top:582px;color:#d6d6d6;transform:scaleX(0.9407);transform-origin:0 0">17/01/2025 1:53 SA</div>
<div class="t" style="left:868px;top:582px;color:#d6d6d6;letter-spacing:0.063px">Application exten...</div>
<div class="t" style="right:119px;top:582px;color:#d6d6d6;transform:scaleX(0.9078);transform-origin:100% 0">4.688 KB</div>
<svg style="left:384px;top:612px" width="16" height="12" viewBox="0 0 16 12"><rect x="0.5" y="0.5" width="15" height="11" fill="#fafafa" stroke="#6f6f6f" stroke-width="1"/><rect x="0.5" y="0.5" width="15" height="1" fill="#8a8a8a"/><rect x="4.9" y="3" width="6.3" height="7" fill="#1a78d6"/><path d="M1.5 3.5 H3.8 M1.5 5.5 H3.8 M1.5 7.5 H3.8 M1.5 9.5 H3.8 M12.2 3.5 H14.3 M12.2 5.5 H14.3" stroke="#a0a0a0" stroke-width="1"/></svg>
<div class="t" style="left:404px;top:613px;color:#fff;letter-spacing:-0.123px">createdump.exe</div>
<svg style="left:642px;top:613px" width="12" height="12" viewBox="0 0 12 12"><g transform="translate(0.45 0.45)"><circle cx="6" cy="6" r="5.5" fill="#259a1e"/><circle cx="6" cy="6" r="4.8" fill="#41bf2b"/><path d="M3.8 5.6 L5.4 7 L9.2 3.8" stroke="#fff" stroke-width="1.25" fill="none" stroke-linecap="round" stroke-linejoin="round"/></g></svg>
<div class="t" style="left:724px;top:613px;color:#d6d6d6;transform:scaleX(0.9406);transform-origin:0 0">17/01/2025 1:58 SA</div>
<div class="t" style="left:868px;top:613px;color:#d6d6d6;letter-spacing:0.26px">Application</div>
<div class="t" style="right:119px;top:613px;color:#d6d6d6;transform:scaleX(0.9266);transform-origin:100% 0">61 KB</div>
<svg style="left:384px;top:642px" width="17" height="16" viewBox="0 0 17 16"><path d="M0.5 0.5 H8.3 L12.5 4.6 V15.5 H0.5Z" fill="#fff" stroke="#6e6e6e" stroke-width="1"/><path d="M8.3 0.5 V4.6 H12.5" fill="#e6e6e6" stroke="#6e6e6e" stroke-width="1"/><rect x="2" y="0.3" width="1" height="2" fill="#333"/><rect x="4" y="0.3" width="1" height="2" fill="#333"/><rect x="6" y="0.3" width="1" height="2" fill="#333"/><path d="M2 4.6 H7" stroke="#b8cce0" stroke-width="0.8"/><rect x="2.1" y="6.5" width="8.8" height="7.3" fill="url(#ng)"/><path d="M2.1 13.4 H10.9" stroke="#0b6b0b" stroke-width="0.9"/><path d="M8.3 12.6 L14.6 2.6" stroke="#f3ad00" stroke-width="2.6"/><path d="M14.3 3.1 L15 2" stroke="#a8c0e0" stroke-width="2.4"/><path d="M15 2 L15.6 1" stroke="#c00000" stroke-width="2.4"/><path d="M7.7 13.6 L8.6 12.3" stroke="#333" stroke-width="1"/></svg>
<div class="t" style="left:404px;top:644px;color:#fff;letter-spacing:0.164px">ChotDonHang.txt</div>
<svg style="left:642px;top:644px" width="12" height="12" viewBox="0 0 12 12"><g transform="translate(0.45 0.45)"><circle cx="6" cy="6" r="5.5" fill="#259a1e"/><circle cx="6" cy="6" r="4.8" fill="#41bf2b"/><path d="M3.8 5.6 L5.4 7 L9.2 3.8" stroke="#fff" stroke-width="1.25" fill="none" stroke-linecap="round" stroke-linejoin="round"/></g></svg>
<div class="t" style="left:724px;top:644px;color:#d6d6d6;transform:scaleX(0.9492);transform-origin:0 0">09/02/2025 12:19 CH</div>
<div class="t" style="left:868px;top:644px;color:#d6d6d6;transform:scaleX(0.8804);transform-origin:0 0">TXT File</div>
<div class="t" style="right:119px;top:644px;color:#d6d6d6;transform:scaleX(0.8962);transform-origin:100% 0">3 KB</div>
<svg style="left:386px;top:674px" width="12" height="16" viewBox="0 0 12 16"><path d="M0.5 0.5 H8.5 L11.5 3.5 V15.5 H0.5Z" fill="#fff" stroke="#6a6a6a" stroke-width="1"/><path d="M8.5 0.5 V3.5 H11.5" fill="#e2e2e2" stroke="#6a6a6a" stroke-width="0.9"/><circle cx="4.75" cy="6.75" r="1.8" fill="#dfe3e8" stroke="#8e99a6" stroke-width="1.5"/><circle cx="7.5" cy="10.5" r="1.3" fill="#fff" stroke="#5c6670" stroke-width="1.2"/></svg>
<div class="t" style="left:404px;top:675px;color:#fff;transform:scaleX(0.9488);transform-origin:0 0">EPPlus.dll</div>
<svg style="left:642px;top:675px" width="12" height="12" viewBox="0 0 12 12"><g transform="translate(0.45 0.45)"><circle cx="6" cy="6" r="5.5" fill="#259a1e"/><circle cx="6" cy="6" r="4.8" fill="#41bf2b"/><path d="M3.8 5.6 L5.4 7 L9.2 3.8" stroke="#fff" stroke-width="1.25" fill="none" stroke-linecap="round" stroke-linejoin="round"/></g></svg>
<div class="t" style="left:724px;top:675px;color:#d6d6d6;letter-spacing:-0.282px">16/01/2025 4:08 CH</div>
<div class="t" style="left:868px;top:675px;color:#d6d6d6;letter-spacing:0.063px">Application exten...</div>
<div class="t" style="right:119px;top:675px;color:#d6d6d6;transform:scaleX(0.9078);transform-origin:100% 0">3.719 KB</div>
<svg style="left:386px;top:705px" width="12" height="16" viewBox="0 0 12 16"><path d="M0.5 0.5 H8.5 L11.5 3.5 V15.5 H0.5Z" fill="#fff" stroke="#6a6a6a" stroke-width="1"/><path d="M8.5 0.5 V3.5 H11.5" fill="#e2e2e2" stroke="#6a6a6a" stroke-width="0.9"/><circle cx="4.75" cy="6.75" r="1.8" fill="#dfe3e8" stroke="#8e99a6" stroke-width="1.5"/><circle cx="7.5" cy="10.5" r="1.3" fill="#fff" stroke="#5c6670" stroke-width="1.2"/></svg>
<div class="t" style="left:404px;top:706px;color:#fff;letter-spacing:-0.235px">EPPlus.Interfaces.dll</div>
<svg style="left:642px;top:706px" width="12" height="12" viewBox="0 0 12 12"><g transform="translate(0.45 0.45)"><circle cx="6" cy="6" r="5.5" fill="#259a1e"/><circle cx="6" cy="6" r="4.8" fill="#41bf2b"/><path d="M3.8 5.6 L5.4 7 L9.2 3.8" stroke="#fff" stroke-width="1.25" fill="none" stroke-linecap="round" stroke-linejoin="round"/></g></svg>
<div class="t" style="left:724px;top:706px;color:#d6d6d6;letter-spacing:-0.224px">15/11/2024 8:59 CH</div>
<div class="t" style="left:868px;top:706px;color:#d6d6d6;letter-spacing:0.063px">Application exten...</div>
<div class="t" style="right:119px;top:706px;color:#d6d6d6;transform:scaleX(0.9205);transform-origin:100% 0">18 KB</div>
<svg style="left:386px;top:736px" width="12" height="16" viewBox="0 0 12 16"><path d="M0.5 0.5 H8.5 L11.5 3.5 V15.5 H0.5Z" fill="#fff" stroke="#6a6a6a" stroke-width="1"/><path d="M8.5 0.5 V3.5 H11.5" fill="#e2e2e2" stroke="#6a6a6a" stroke-width="0.9"/><circle cx="4.75" cy="6.75" r="1.8" fill="#dfe3e8" stroke="#8e99a6" stroke-width="1.5"/><circle cx="7.5" cy="10.5" r="1.3" fill="#fff" stroke="#5c6670" stroke-width="1.2"/></svg>
<div class="t" style="left:404px;top:737px;color:#fff;letter-spacing:-0.237px">EPPlus.System.Drawing.dll</div>
<svg style="left:642px;top:737px" width="12" height="12" viewBox="0 0 12 12"><g transform="translate(0.45 0.45)"><circle cx="6" cy="6" r="5.5" fill="#259a1e"/><circle cx="6" cy="6" r="4.8" fill="#41bf2b"/><path d="M3.8 5.6 L5.4 7 L9.2 3.8" stroke="#fff" stroke-width="1.25" fill="none" stroke-linecap="round" stroke-linejoin="round"/></g></svg>
<div class="t" style="left:724px;top:737px;color:#d6d6d6;letter-spacing:-0.24px">15/11/2024 9:00 CH</div>
<div class="t" style="left:868px;top:737px;color:#d6d6d6;letter-spacing:0.063px">Application exten...</div>
<div class="t" style="right:119px;top:737px;color:#d6d6d6;transform:scaleX(0.9205);transform-origin:100% 0">19 KB</div>
<svg style="left:386px;top:767px" width="12" height="16" viewBox="0 0 12 16"><path d="M0.5 0.5 H8.5 L11.5 3.5 V15.5 H0.5Z" fill="#fff" stroke="#6a6a6a" stroke-width="1"/><path d="M8.5 0.5 V3.5 H11.5" fill="#e2e2e2" stroke="#6a6a6a" stroke-width="0.9"/><circle cx="4.75" cy="6.75" r="1.8" fill="#dfe3e8" stroke="#8e99a6" stroke-width="1.5"/><circle cx="7.5" cy="10.5" r="1.3" fill="#fff" stroke="#5c6670" stroke-width="1.2"/></svg>
<div class="t" style="left:404px;top:768px;color:#fff;letter-spacing:0.047px">Google.Apis.Auth.dll</div>
<svg style="left:642px;top:768px" width="12" height="12" viewBox="0 0 12 12"><g transform="translate(0.45 0.45)"><circle cx="6" cy="6" r="5.5" fill="#259a1e"/><circle cx="6" cy="6" r="4.8" fill="#41bf2b"/><path d="M3.8 5.6 L5.4 7 L9.2 3.8" stroke="#fff" stroke-width="1.25" fill="none" stroke-linecap="round" stroke-linejoin="round"/></g></svg>
<div class="t" style="left:724px;top:768px;color:#d6d6d6;letter-spacing:-0.24px">15/04/2024 3:03 CH</div>
<div class="t" style="left:868px;top:768px;color:#d6d6d6;letter-spacing:0.063px">Application exten...</div>
<div class="t" style="right:119px;top:768px;color:#d6d6d6;transform:scaleX(0.9175);transform-origin:100% 0">228 KB</div>
<svg style="left:386px;top:798px" width="12" height="16" viewBox="0 0 12 16"><path d="M0.5 0.5 H8.5 L11.5 3.5 V15.5 H0.5Z" fill="#fff" stroke="#6a6a6a" stroke-width="1"/><path d="M8.5 0.5 V3.5 H11.5" fill="#e2e2e2" stroke="#6a6a6a" stroke-width="0.9"/><circle cx="4.75" cy="6.75" r="1.8" fill="#dfe3e8" stroke="#8e99a6" stroke-width="1.5"/><circle cx="7.5" cy="10.5" r="1.3" fill="#fff" stroke="#5c6670" stroke-width="1.2"/></svg>
<div class="t" style="left:404px;top:799px;color:#fff">Google.Apis.Core.dll</div>
<div class="t" style="left:724px;top:799px;color:#d6d6d6;letter-spacing:-0.24px">15/04/2024 3:03 CH</div>
<div class="t" style="left:868px;top:799px;color:#d6d6d6;letter-spacing:0.063px">Application exten...</div>
<div class="t" style="right:119px;top:799px;color:#d6d6d6;transform:scaleX(0.9205);transform-origin:100% 0">20 KB</div>
<svg style="left:0;top:0" width="1173" height="800" viewBox="0 0 1173 800">
<g stroke="#e31b1b" fill="none" stroke-linecap="round" stroke-linejoin="round">
<path d="M347.5 268.7 C350.5 269.0 355.8 269.9 365.7 270.5 C375.6 271.1 391.7 271.2 406.6 272.3 C421.5 273.4 440.9 276.0 455.0 277.3 C469.1 278.6 478.1 279.5 490.9 280.3 C503.7 281.1 523.3 281.2 531.8 282.2 C540.3 283.1 539.8 284.0 542.0 286.0 C544.2 288.0 544.6 290.0 545.0 294.0 C545.4 298.0 544.6 303.9 544.1 310.0 C543.6 316.1 542.3 325.4 541.8 330.6 C541.2 335.8 541.0 339.3 540.8 341.0" stroke-width="10"/>
<path d="M356.5 272.0 C356.5 276.7 356.5 293.2 356.6 300.0 C356.7 306.8 356.1 309.7 357.0 313.0 C357.9 316.3 359.7 318.5 362.0 320.0 C364.3 321.5 362.4 321.2 370.7 322.0 C379.0 322.8 396.7 323.6 411.6 325.0 C426.5 326.4 446.8 328.9 460.0 330.6 C473.2 332.4 479.0 334.5 491.0 335.5 C503.0 336.5 522.0 336.8 532.0 336.5 C542.0 336.2 547.8 334.4 551.0 334.0" stroke-width="10"/>
<path d="M195.7 499.9 C209.3 490.6 250.0 463.0 277.2 444.4 C304.4 425.8 345.2 397.6 358.8 388.3" stroke-width="10"/>
<path d="M305.7 388.2 C309.5 386.1 319.2 379.4 328.7 375.9 C338.2 372.3 351.2 368.8 362.5 366.9 C373.8 364.9 390.6 364.6 396.2 364.2" stroke-width="9.5"/>
<path d="M396.2 364.2 C394.7 367.8 390.2 378.6 387.2 386.0 C384.2 393.4 381.1 401.1 378.2 408.5 C375.3 415.9 371.2 426.8 369.8 430.4" stroke-width="9.5"/>
</g></svg>
</body></html>
